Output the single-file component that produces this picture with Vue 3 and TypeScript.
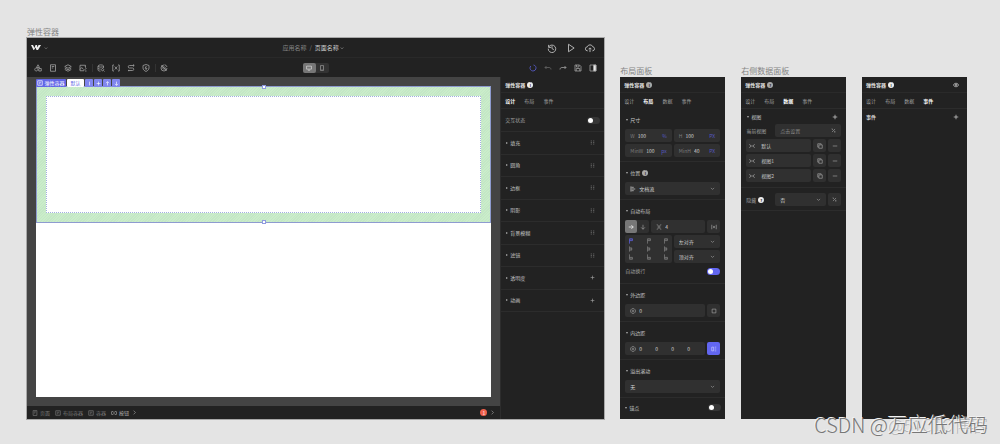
<script setup lang="ts">
import { h, ref, type FunctionalComponent } from 'vue'

const paths: Record<string, string> = {
  down: 'M3 6l5 5 5-5',
  right: 'M5 2l6 6-6 6',
  history: 'M2.5 3v4h4M3 6a6 6 0 1 1-1 3M8 5v4l3 1.5',
  play: 'M4 2l9 6-9 6z',
  cloud: 'M4.5 12.5H4a3.2 3.2 0 0 1-.3-6.4A4.6 4.6 0 0 1 12.4 6a3.3 3.3 0 0 1 .2 6.5h-.8M8 14.500V8M5.700 10L8 7.700l2.300 2.300',
  shapes: 'M8 1.500L5 7h6zM4.500 8a3 3 0 1 0 .1 0M9.500 9h5v5h-5z',
  page: 'M3 1.500h10v13H3zM5.500 5h5M5.500 8h3',
  layers: 'M8 1.500l6.500 3.500L8 8.500 1.500 5zM1.500 8L8 11.500 14.500 8M1.500 11L8 14.500l6.500-3.500',
  image: 'M10 13.500H2v-11h11v5M2 11l3.500-4L9 11M10 5h.5M10 13l5-5M12 14h3',
  database: 'M2 4c0-3 11-3 11 0s-11 3-11 0v8c0 1.500 3 2.300 5 2.300M13 4v4M2 8c0 1.500 3 2.200 5 2.200M11 9a2.300 2.300 0 1 0 .1 0M13 13l2 2',
  variable: 'M4 2H1.500v12H4M12 2h2.500v12H12M5.500 5l5 6M10.500 5l-5 6',
  flow: 'M14 3H5a2.500 2.500 0 0 0 0 5h6a2.500 2.500 0 0 1 0 5H2M12 1l2.500 2L12 5M3.500 11.500v3',
  shield: 'M8 1l6 2v5c0 3.500-3 5.500-6 7-3-1.500-6-3.500-6-7V3zM8.800 4L6 8.500h4L7.500 12',
  orbit: 'M8 2a6 6 0 1 0 6 6M8 5.500a2.500 2.500 0 1 0 .1 0M3 3l10 10M9 1.500A6 6 0 0 1 14 6',
  desktop: 'M1.500 3h13v8h-13zM5 14h6',
  phone: 'M4 1.500h8v13H4zM7 12h2',
  loading: 'M9 2a6 6 0 1 1-5.500 2',
  undo: 'M5 4L2 7l3 3M2 7h8c3 0 4 2 4 4',
  redo: 'M11 4l3 3-3 3M14 7H6c-3 0-4 2-4 4',
  save: 'M2 2h9l3 3v9H2zM5 2v4h5V2M4.500 14V9h7v5',
  grid: 'M2.500 3h3M10.500 3h3M2.500 8h3M10.500 8h3M2.500 13h3M10.500 13h3',
  plus: 'M8 2v12M2 8h12',
  minus: 'M2 8h12',
  arrowRight: 'M2 8h12M9 3l5 5-5 5',
  arrowDown: 'M8 2v12M3 9l5 5 5-5',
  arrowUp: 'M8 14V2M3 7l5-5 5 5',
  gap: 'M2 2h2l2 3v6l-2 3H2M14 2h-2l-2 3v6l2 3h2',
  spread: 'M2 2v12M14 2v12M6 5l2 3-2 3M10 5L8 8l2 3',
  box: 'M3 3h10v10H3z',
  ring: 'M8 1.500a6.500 6.500 0 1 0 .1 0M5 8h6M8 5v6',
  split: 'M2 3h5v10H2zM10 3h4M10 8h4M10 13h4',
  stack: 'M2.500 1v14M4 3.500h6M4 8h10M4 12.500h6',
  frame: 'M2 2h12v12H2zM5 6h6M5 10h4',
  copy: 'M5 5h9v9H5zM11 5V2H2v9h3',
  percent: 'M3 13L13 3M3 3l3 3M10 13h4M12 9v4M5 3H2',
  expand: 'M1 4l4 3M1 12l4-3M15 4l-4 3M15 12l-4-3M6 8h4',
  link: 'M6 4H4a4 4 0 0 0 0 8h2M10 4h2a4 4 0 0 1 0 8h-2M5 8h6',
  eye: 'M1 8c3-6 11-6 14 0-3 6-11 6-14 0zM8 6a2 2 0 1 0 .1 0',
  flagTop: 'M4 15V2h8v5H4M8 2v5',
  flagMid: 'M4 1v14M4 5h6v6H4M8 5v6',
  flagLow: 'M4 1v13h8V9H4M8 9v5',
}

const Icon: FunctionalComponent<{ name: string }> = (props) =>
  h('svg', { class: 'icon', viewBox: '0 0 16 16', 'aria-hidden': 'true' }, [h('path', { d: paths[props.name] })])
Icon.props = ['name']

const tools = ['shapes', 'page', 'layers', 'image', '|', 'database', 'variable', 'flow', 'shield', '|', 'orbit']
const tags = ['minus', 'plus', 'arrowUp', 'arrowDown']
const styles = [
  { name: '填充', icon: 'grid' },
  { name: '圆角', icon: 'grid' },
  { name: '边框', icon: 'grid' },
  { name: '阴影', icon: 'grid' },
  { name: '背景模糊', icon: 'grid' },
  { name: '滤镜', icon: 'grid' },
  { name: '透明度', icon: 'plus' },
  { name: '动画', icon: 'plus' },
]
const sizes = ref([
  { label: 'W', value: '100', unit: '%' },
  { label: 'H', value: '100', unit: 'PX' },
  { label: 'MinW', value: '100', unit: 'px' },
  { label: 'MinH', value: '40', unit: 'PX' },
])
const aligns = ['flagTop', 'flagTop', 'flagTop', 'flagMid', 'flagMid', 'flagMid', 'flagLow', 'flagLow', 'flagLow']
const crumbs = [
  { name: '页面', icon: 'page' },
  { name: '布局容器', icon: 'frame' },
  { name: '容器', icon: 'frame' },
  { name: '按钮', icon: 'link' },
]
const panelTabs = ['设计', '布局', '数据', '事件']
const views = ['默认', '视图1', '视图2']
const paddings = ref(['0', '0', '0', '0'])
const gapValue = ref('4')
const marginValue = ref('0')
const interactive = ref(false)
const wrap = ref(true)
const anchor = ref(false)
</script>

<template>
  <main class="board">
    <section class="column">
      <h2 class="caption">弹性容器</h2>
      <div class="editor">
        <header class="topbar">
          <button class="brand" aria-label="菜单">
            <svg class="logo" viewBox="0 0 20 14" aria-hidden="true">
              <path d="M0 2h4l3 6 2-6h3l1 5 2-5h5l-6 10h-3l-2-5-3 5H5z" />
            </svg>
            <Icon name="down" class="tiny" />
          </button>
          <div class="names">
            <span class="dim">应用名称</span><span class="dim">/</span>
            <button class="page-name">页面名称<Icon name="down" class="tiny" /></button>
          </div>
          <div class="actions">
            <button aria-label="历史"><Icon name="history" class="large" /></button>
            <button aria-label="预览"><Icon name="play" class="large" /></button>
            <button aria-label="发布"><Icon name="cloud" class="large" /></button>
          </div>
        </header>
        <div class="toolbar">
          <div class="tools">
            <template v-for="(t, i) in tools" :key="i">
              <i v-if="t === '|'" class="rule"></i>
              <button v-else :aria-label="t"><Icon :name="t" class="medium" /></button>
            </template>
          </div>
          <div class="devices">
            <button class="device on" aria-label="桌面"><Icon name="desktop" class="device-icon" /></button>
            <button class="device" aria-label="手机"><Icon name="phone" /></button>
          </div>
          <div class="states">
            <Icon name="loading" class="medium loading" />
            <button aria-label="撤销" class="faded"><Icon name="undo" class="medium" /></button>
            <button aria-label="重做"><Icon name="redo" class="medium" /></button>
            <button aria-label="保存"><Icon name="save" class="medium" /></button>
            <button aria-label="面板">
              <svg class="icon medium" viewBox="0 0 16 16" aria-hidden="true">
                <path d="M2 2h12v12H2z" /><path class="solid" d="M9 2h5v12H9z" />
              </svg>
            </button>
          </div>
        </div>
        <div class="work">
          <div class="stage">
            <div class="canvas">
              <div class="artboard">
                <div class="selection">
                  <div class="inner"></div>
                  <div class="tags">
                    <span class="tag main"><Icon name="frame" />弹性容器</span>
                    <button class="tag state">默认</button>
                    <button v-for="t in tags" :key="t" class="tag" :aria-label="t">
                      <Icon :name="t" class="small" :class="{ upright: t === 'minus' }" />
                    </button>
                  </div>
                  <i class="handle top"></i><i class="handle bottom"></i>
                </div>
              </div>
            </div>
            <footer class="crumbs">
              <a v-for="(c, i) in crumbs" :key="i" href="#" :class="{ current: i === 3 }"><Icon :name="c.icon" />{{ c.name }}</a>
              <Icon name="right" class="small" />
              <span class="alert">1</span>
              <Icon name="right" class="small" />
            </footer>
          </div>
          <aside class="panel">
            <h3 class="head">弹性容器<i class="info bright">i</i></h3>
            <nav class="tabs">
              <button class="on">设计</button><button>布局</button><button>事件</button>
            </nav>
            <label class="line state-line">交互状态<input v-model="interactive" type="checkbox" class="switch" /></label>
            <div class="style-list">
              <div v-for="s in styles" :key="s.name" class="style-row">
                <span class="fold closed">{{ s.name }}</span>
                <button :aria-label="s.name"><Icon :name="s.icon" class="small" /></button>
              </div>
            </div>
          </aside>
        </div>
      </div>
    </section>

    <section class="column side">
      <h2 class="caption">布局面板</h2>
      <div class="panel">
        <h3 class="head">弹性容器<i class="info">i</i></h3>
        <nav class="tabs"><button v-for="(t, i) in panelTabs" :key="t" :class="{ on: i === 1 }">{{ t }}</button></nav>

        <div class="block first">
          <h4 class="fold">尺寸</h4>
          <div class="pair">
            <label v-for="s in sizes" :key="s.label" class="field">
              <span class="key">{{ s.label }}</span><input v-model="s.value" type="text" /><span class="unit">{{ s.unit }}</span>
            </label>
          </div>
        </div>

        <div class="block">
          <h4 class="fold">位置<i class="info">i</i></h4>
          <label class="field pick"><Icon name="stack" class="lit" />
            <select aria-label="位置"><option>文档流</option></select><Icon name="down" class="small" />
          </label>
        </div>

        <div class="block">
          <h4 class="fold">自动布局</h4>
          <div class="row">
            <div class="direction">
              <button class="on" aria-label="横向"><Icon name="arrowRight" /></button>
              <button aria-label="纵向"><Icon name="arrowDown" /></button>
            </div>
            <label class="field"><Icon name="gap" /><input v-model="gapValue" type="text" aria-label="间距" /></label>
            <button class="square" aria-label="均分"><Icon name="spread" /></button>
          </div>
          <div class="pair">
            <div class="matrix">
              <button v-for="(a, i) in aligns" :key="i" :class="{ on: i === 0 }" :aria-label="'对齐' + (i + 1)"><Icon :name="a" /></button>
            </div>
            <div class="pile">
              <label class="field pick"><select aria-label="水平对齐"><option>左对齐</option></select><Icon name="down" class="small" /></label>
              <label class="field pick"><select aria-label="垂直对齐"><option>顶对齐</option></select><Icon name="down" class="small" /></label>
            </div>
          </div>
          <label class="wrap-line">自动换行<input v-model="wrap" type="checkbox" class="switch" /></label>
        </div>

        <div class="block">
          <h4 class="fold">外边距</h4>
          <div class="row">
            <label class="field"><Icon name="ring" /><input v-model="marginValue" type="text" aria-label="外边距" /></label>
            <button class="square" aria-label="分别设置外边距"><Icon name="box" /></button>
          </div>
        </div>

        <div class="block">
          <h4 class="fold">内边距</h4>
          <div class="row">
            <div class="field"><Icon name="ring" />
              <input v-for="(_, i) in paddings" :key="i" v-model="paddings[i]" type="text" :aria-label="'内边距' + (i + 1)" />
            </div>
            <button class="square on" aria-label="分别设置内边距"><Icon name="split" /></button>
          </div>
        </div>

        <div class="block">
          <h4 class="fold">溢出滚动</h4>
          <label class="field pick"><select aria-label="溢出滚动"><option>无</option></select><Icon name="down" class="small" /></label>
        </div>

        <label class="line anchor-line"><span class="fold">锚点</span><input v-model="anchor" type="checkbox" class="switch" /></label>
      </div>
    </section>

    <section class="column side">
      <h2 class="caption">右侧数据面板</h2>
      <div class="panel">
        <h3 class="head">弹性容器<i class="info">?</i></h3>
        <nav class="tabs"><button v-for="(t, i) in panelTabs" :key="t" :class="{ on: i === 2 }">{{ t }}</button></nav>
        <div class="data">
          <div class="data-head"><h4 class="fold">视图</h4><button aria-label="添加视图"><Icon name="plus" class="lit" /></button></div>
          <div class="rows">
            <div class="row">
              <label class="name" for="current-view">当前视图</label>
              <div class="field"><input id="current-view" type="text" placeholder="点击设置" /><Icon name="percent" class="small" /></div>
            </div>
            <div v-for="v in views" :key="v" class="row">
              <button class="field view"><Icon name="expand" />{{ v }}</button>
              <button class="square" aria-label="复制"><Icon name="copy" /></button>
              <button class="square" aria-label="删除"><Icon name="minus" /></button>
            </div>
          </div>
        </div>
        <div class="data hidden-block">
          <div class="row">
            <label class="name" for="hide">隐藏<i class="info bright">?</i></label>
            <div class="field pick"><select id="hide"><option>否</option></select><Icon name="down" class="small" /></div>
            <button class="square" aria-label="绑定"><Icon name="percent" class="small" /></button>
          </div>
        </div>
      </div>
    </section>

    <section class="column side">
      <h2 class="caption"></h2>
      <div class="panel">
        <h3 class="head">弹性容器<i class="info bright">i</i><button class="end" aria-label="显示"><Icon name="eye" /></button></h3>
        <nav class="tabs"><button v-for="(t, i) in panelTabs" :key="t" :class="{ on: i === 3 }">{{ t }}</button></nav>
        <div class="line events"><h4>事件</h4><button aria-label="添加事件"><Icon name="plus" /></button></div>
      </div>
    </section>

    <div class="marks"><span class="mark faint">@51CTO博客</span><span class="mark">CSDN @万应低代码</span></div>
  </main>
</template>

<style>
body {
  margin: 0;
  background: #e4e4e4;
}
</style>

<style scoped>
.board {
  position: relative;
  box-sizing: border-box;
  min-height: 100vh;
  padding: 27px 33px 25px 27px;
  display: grid;
  grid-template-columns: minmax(0, 578fr) repeat(3, minmax(0, 105fr));
  gap: 16px;
  font: 5px/8px 'Noto Sans CJK SC', 'Noto Sans', sans-serif;
  color: #a0a0a0;
}
.board *,
.board *::before {
  box-sizing: border-box;
}
button,
input,
select {
  font: inherit;
  color: inherit;
  background: none;
  border: 0;
  padding: 0;
  margin: 0;
  min-width: 0;
  border-radius: 0;
  appearance: none;
}
button {
  display: flex;
  align-items: center;
  justify-content: center;
  gap: 1px;
}
a {
  color: inherit;
  text-decoration: none;
}
h2,
h3,
h4 {
  margin: 0;
  font-size: 5px;
}
.column {
  display: flex;
  flex-direction: column;
}
.side {
  padding-top: 39px;
}
.caption {
  height: 11px;
  font-size: 8px;
  line-height: 10px;
  font-weight: 400;
  color: #858585;
}
.icon {
  display: block;
  flex: none;
  width: 6px;
  height: 6px;
  fill: none;
  stroke: currentColor;
  stroke-width: 1.8;
}
.icon.tiny {
  width: 4px;
  height: 4px;
  stroke-width: 2;
}
.icon.small {
  width: 5px;
  height: 5px;
  stroke-width: 2;
}
.icon.medium {
  width: 8px;
  height: 8px;
  stroke-width: 1.6;
}
.icon.large {
  width: 10px;
  height: 10px;
  stroke-width: 1.5;
}
.lit {
  color: #d8d8d8;
}
.solid {
  fill: #e8e8e8;
}
.upright {
  transform: rotate(90deg);
}

.editor {
  flex: 1;
  display: flex;
  flex-direction: column;
  background: #222;
  box-shadow: 0 0 0 1px #a8a8a8;
}
.topbar,
.toolbar {
  display: grid;
  grid-template-columns: 1fr auto 1fr;
  align-items: center;
  padding: 0 9px 0 4px;
}
.topbar {
  height: 19px;
  color: #b8b8b8;
}
.toolbar {
  height: 20px;
  border-top: 1px solid #292929;
  padding: 0 7px;
}
.brand {
  justify-self: start;
  gap: 3px;
}
.logo {
  width: 10px;
  height: 7px;
  fill: #eee;
}
.names {
  display: flex;
  align-items: center;
  gap: 3px;
  font-size: 6px;
}
.page-name {
  color: #ccc;
}
.dim {
  color: #858585;
}
.actions,
.states {
  justify-self: end;
  display: flex;
  align-items: center;
}
.actions {
  gap: 9px;
}
.states {
  gap: 7px;
}
.tools {
  display: flex;
  align-items: center;
  gap: 7px;
}
.rule {
  width: 1px;
  height: 8px;
  margin: 0 -3px 0 -2px;
  background: #333;
}
.loading {
  color: #5c5fd6;
}
.faded {
  color: #666;
}
.devices {
  display: flex;
  border-radius: 2px;
  background: #333;
}
.device {
  width: 13px;
  height: 10px;
  border-radius: 2px;
}
.device.on {
  background: #777;
  color: #ddd;
}
.work {
  flex: 1;
  display: grid;
  grid-template-columns: minmax(0, 1fr) 104px;
}
.stage {
  display: flex;
  flex-direction: column;
}
.canvas {
  flex: 1;
  display: flex;
  padding: 9px;
  background: #444;
}
.artboard {
  flex: 1;
  background: #fff;
}
.selection {
  position: relative;
  height: 137px;
  padding: 9px;
  border: 1px solid #8e9bd0;
  background: repeating-linear-gradient(135deg, #caedca 0 1px, #c4e7c6 1px 2px);
}
.inner {
  height: 100%;
  border: 1px dotted #a3b0e0;
  background: #fff;
}
.tags {
  position: absolute;
  left: -1px;
  bottom: 100%;
  display: flex;
  gap: 1px;
}
.tag {
  display: flex;
  align-items: center;
  justify-content: center;
  gap: 1px;
  width: 8px;
  height: 8px;
  border-radius: 1px;
  background: #8086ee;
  color: #fff;
}
.tag.main {
  width: 30px;
  background: #6266e6;
}
.tag.state {
  width: 17px;
  background: #fff;
  color: #6266e6;
}
.handle {
  position: absolute;
  left: 50%;
  width: 4px;
  height: 4px;
  margin: -2px;
  border: 1px solid #8f9be0;
  background: #fff;
}
.handle.top {
  top: 0;
}
.handle.bottom {
  top: 100%;
}
.crumbs {
  display: flex;
  align-items: center;
  gap: 5px;
  height: 13px;
  padding: 0 5px;
}
.crumbs a {
  display: flex;
  align-items: center;
  gap: 2px;
  color: #777;
}
.crumbs a.current {
  color: #bbb;
}
.crumbs > .icon {
  margin-left: -2px;
}
.alert {
  width: 7px;
  height: 7px;
  margin-left: auto;
  border-radius: 50%;
  background: #f0604c;
  color: #fff;
  line-height: 7px;
  text-align: center;
}

.panel {
  flex: 1;
  background: #222;
}
aside.panel {
  border-left: 1px solid #2d2d2d;
}
.head {
  display: flex;
  align-items: center;
  gap: 2px;
  height: 16px;
  padding: 0 4px;
  border-bottom: 1px solid #2a2a2a;
  color: #e4e4e4;
  font-weight: 700;
}
.end {
  margin-left: auto;
  margin-right: 4px;
}
.info {
  width: 6px;
  height: 6px;
  border-radius: 50%;
  background: #aaa;
  color: #222;
  font-size: 4px;
  line-height: 6px;
  font-style: normal;
  font-weight: 700;
  text-align: center;
}
.info.bright {
  background: #eee;
}
.tabs {
  display: flex;
  gap: 9px;
  height: 15px;
  padding: 0 4px;
}
.tabs .on {
  color: #fff;
  font-weight: 700;
}
.line {
  display: flex;
  align-items: center;
  justify-content: space-between;
  height: 23px;
  padding: 0 4px;
  border-top: 1px solid #2c2c2c;
}
.anchor-line {
  height: 20px;
}
.switch {
  display: flex;
  width: 13px;
  height: 7px;
  border-radius: 4px;
  background: #363636;
}
.switch::before {
  content: '';
  width: 5px;
  height: 5px;
  margin: 1px;
  border-radius: 50%;
  background: #fff;
}
.switch:checked {
  background: #6266f0;
}
.style-list {
  display: grid;
  grid-template-rows: repeat(8, 1fr);
  min-height: 181px;
  border-bottom: 1px solid #2c2c2c;
}
.style-row {
  display: flex;
  align-items: center;
  justify-content: space-between;
  padding: 0 9px 0 4px;
  border-top: 1px solid #2c2c2c;
}
.fold {
  display: flex;
  align-items: center;
  gap: 2px;
  font-weight: 400;
  color: #c4c4c4;
}
.fold::before {
  content: '';
  margin-left: 1px;
  border: 1px solid transparent;
  border-top: 2px solid #aaa;
  border-bottom: 0;
}
.closed::before {
  border: 1px solid transparent;
  border-left: 2px solid #aaa;
  border-right: 0;
}
.block {
  padding: 0 5px 4px;
  border-top: 1px solid #2c2c2c;
}
.block.first {
  border-top-color: #222;
}
.block > .fold {
  height: 20px;
  padding-top: 2px;
}
.pair {
  display: grid;
  grid-template-columns: 1fr 1fr;
  gap: 2px;
}
.row {
  display: flex;
  gap: 2px;
}
.row + .pair {
  margin-top: 2px;
}
.pile,
.rows {
  display: grid;
  gap: 2px;
}
.field {
  flex: 1;
  min-width: 0;
  height: 13px;
  display: flex;
  align-items: center;
  gap: 3px;
  padding: 0 5px;
  border-radius: 2px;
  background: #303030;
}
.field input,
.field select {
  flex: 1;
  width: 0;
  height: 8px;
  color: #d0d0d0;
}
.field input::placeholder {
  color: #888;
}
.key {
  color: #7c7c7c;
}
.unit {
  color: #5558c0;
}
.direction {
  display: flex;
  border-radius: 2px;
  background: #303030;
}
.direction button {
  width: 12px;
  height: 13px;
  border-radius: 2px;
}
.direction .on {
  background: #777;
  color: #fff;
}
.square {
  flex: none;
  width: 13px;
  height: 13px;
  border-radius: 2px;
  background: #303030;
}
.square.on {
  background: #6266f0;
  color: #c8caff;
}
.matrix {
  display: grid;
  grid-template-columns: repeat(3, 6px);
  justify-content: space-between;
  align-content: space-evenly;
  padding: 1px 3px;
  border-radius: 2px;
  background: #303030;
  color: #858585;
}
.matrix .on {
  color: #6266f0;
}
.wrap-line {
  display: flex;
  align-items: center;
  justify-content: space-between;
  height: 16px;
}
.data {
  padding: 0 5px 5px;
  border-top: 1px solid #2c2c2c;
}
.data-head {
  display: flex;
  align-items: center;
  justify-content: space-between;
  height: 15px;
  padding-right: 3px;
}
.hidden-block {
  padding: 5px 5px 4px;
  border-bottom: 1px solid #2c2c2c;
}
.name {
  display: flex;
  align-items: center;
  gap: 2px;
  width: 27px;
}
.view {
  justify-content: flex-start;
  gap: 6px;
  padding: 0 3px;
  color: #c4c4c4;
}
.events {
  height: 17px;
  padding-right: 8px;
  color: #ddd;
}
.marks {
  position: absolute;
  right: 12px;
  bottom: 7px;
  font-size: 20px;
  line-height: 24px;
  font-weight: 300;
  white-space: nowrap;
}
.mark {
  color: #777;
  text-shadow: -1px -1px 0 #f2f2f2;
}
.faint {
  position: absolute;
  right: 0;
  bottom: 0;
  font-size: 17px;
  color: #b4b4b4;
}
.mark:last-child {
  position: relative;
}
</style>
